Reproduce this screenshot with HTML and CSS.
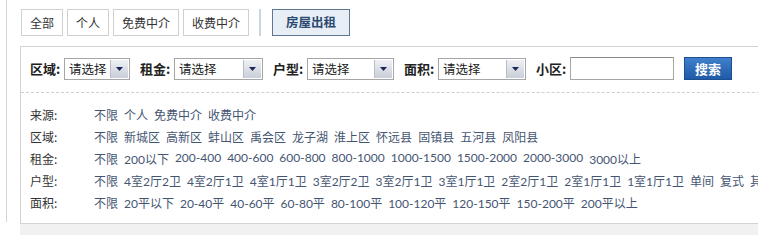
FILE: index.html
```html
<!DOCTYPE html>
<html lang="zh-CN">
<head>
<meta charset="utf-8">
<title>房屋出租</title>
<link rel="stylesheet" href="styles.css">
</head>
<body>
<div class="page">
  <div class="rail"></div>
  <div class="main">
    <div class="tabs">
      <a class="tab">全部</a>
      <a class="tab">个人</a>
      <a class="tab">免费中介</a>
      <a class="tab">收费中介</a>
      <span class="sep"></span>
      <a class="tab tab-active">房屋出租</a>
    </div>
    <div class="panel">
      <div class="filter">
        <div class="field">
          <span class="flabel">区域:</span>
          <span class="select w66"><span class="sel-text">请选择</span><span class="sel-btn"><svg width="7" height="4" viewBox="0 0 7 4"><path d="M0 0H7L3.5 4Z" fill="#1b2756"/></svg></span></span>
        </div>
        <div class="field">
          <span class="flabel">租金:</span>
          <span class="select w89"><span class="sel-text">请选择</span><span class="sel-btn"><svg width="7" height="4" viewBox="0 0 7 4"><path d="M0 0H7L3.5 4Z" fill="#1b2756"/></svg></span></span>
        </div>
        <div class="field">
          <span class="flabel">户型:</span>
          <span class="select w87"><span class="sel-text">请选择</span><span class="sel-btn"><svg width="7" height="4" viewBox="0 0 7 4"><path d="M0 0H7L3.5 4Z" fill="#1b2756"/></svg></span></span>
        </div>
        <div class="field">
          <span class="flabel">面积:</span>
          <span class="select w88"><span class="sel-text">请选择</span><span class="sel-btn"><svg width="7" height="4" viewBox="0 0 7 4"><path d="M0 0H7L3.5 4Z" fill="#1b2756"/></svg></span></span>
        </div>
        <div class="field">
          <span class="flabel">小区:</span>
          <span class="input"></span>
        </div>
        <a class="btn">搜索</a>
      </div>
      <div class="options">
        <div class="opt-row"><span class="olabel">来源:</span><span class="olinks"><a>不限</a><a>个人</a><a>免费中介</a><a>收费中介</a></span></div>
        <div class="opt-row"><span class="olabel">区域:</span><span class="olinks"><a>不限</a><a>新城区</a><a>高新区</a><a>蚌山区</a><a>禹会区</a><a>龙子湖</a><a>淮上区</a><a>怀远县</a><a>固镇县</a><a>五河县</a><a>凤阳县</a></span></div>
        <div class="opt-row"><span class="olabel">租金:</span><span class="olinks"><a>不限</a><a>200以下</a><a>200-400</a><a>400-600</a><a>600-800</a><a>800-1000</a><a>1000-1500</a><a>1500-2000</a><a>2000-3000</a><a>3000以上</a></span></div>
        <div class="opt-row"><span class="olabel">户型:</span><span class="olinks"><a>不限</a><a>4室2厅2卫</a><a>4室2厅1卫</a><a>4室1厅1卫</a><a>3室2厅2卫</a><a>3室2厅1卫</a><a>3室1厅1卫</a><a>2室2厅1卫</a><a>2室1厅1卫</a><a>1室1厅1卫</a><a>单间</a><a>复式</a><a>其他</a></span></div>
        <div class="opt-row"><span class="olabel">面积:</span><span class="olinks"><a>不限</a><a>20平以下</a><a>20-40平</a><a>40-60平</a><a>60-80平</a><a>80-100平</a><a>100-120平</a><a>120-150平</a><a>150-200平</a><a>200平以上</a></span></div>
      </div>
    </div>
    <div class="next"></div>
  </div>
</div>
</body>
</html>
```

FILE: styles.css
```css
html, body {
  margin: 0;
  padding: 0;
  background: #fff;
  overflow: hidden;
}
body {
  font-family: "Noto Sans CJK SC", "Liberation Sans", sans-serif;
  font-size: 12px;
  color: #333;
  width: 758px;
  height: 235px;
}
.page {
  display: flex;
  padding-left: 6px;
  white-space: nowrap;
}
.rail {
  flex: none;
  width: 1px;
  height: 222px;
  background: #cdd7e1;
}
.main {
  flex: none;
  width: 820px;
  margin-left: 13px;
  padding-top: 9px;
}
.tabs {
  display: flex;
  align-items: center;
  gap: 4px;
  margin-left: 1px;
  height: 27px;
  margin-bottom: 10px;
}
.tab {
  display: flex;
  align-items: center;
  height: 25px;
  padding: 0 8px;
  border: 1px solid #d0d0d0;
  background: #fff;
  color: #333;
  line-height: 1;
}
.sep {
  width: 2px;
  height: 27px;
  background: #c9d6e2;
  margin: 0 7px 0 6px;
}
.tab-active {
  padding: 0 13px;
  background: #e7eef6;
  border-color: #5d7896;
  color: #2b4a70;
  font-weight: bold;
  font-size: 12.5px;
}
.panel {
  border: 1px solid #d3d3d3;
  border-right: none;
}
.filter {
  display: flex;
  align-items: center;
  gap: 10px;
  padding: 10px 0 12px 9px;
  border-bottom: 1px dashed #cfcfcf;
}
.field {
  display: flex;
  align-items: center;
  gap: 2px;
}
.flabel {
  font-weight: bold;
  font-size: 13px;
  color: #222;
  width: 32px;
}
.select {
  display: flex;
  align-items: center;
  box-sizing: border-box;
  height: 22px;
  border: 1px solid #a6a6a6;
  background: #fff;
  padding: 0 1px 0 4px;
}
.w66 { width: 66px; }
.w89 { width: 89px; }
.w87 { width: 87px; }
.w88 { width: 88px; }
.sel-text {
  flex: 1;
  font-size: 12.5px;
  color: #222;
}
.sel-btn {
  display: flex;
  align-items: center;
  justify-content: center;
  width: 17px;
  height: 18px;
  border-left: 1px solid #b8bcc4;
  background: linear-gradient(#eef0f4, #c9ced8);
}
.input {
  display: block;
  box-sizing: border-box;
  width: 104px;
  height: 23px;
  border: 1px solid #a6a6a6;
  border-top-color: #8a8a8a;
  background: #fff;
}
.btn {
  display: flex;
  align-items: center;
  justify-content: center;
  box-sizing: border-box;
  width: 48px;
  height: 23px;
  background: linear-gradient(#3f80cc, #1f5aa8);
  border: 1px solid #1b4f92;
  color: #fff;
  font-weight: bold;
  font-size: 13px;
}
.options {
  padding: 10px 0 10px 9px;
}
.opt-row {
  display: flex;
  align-items: center;
  height: 22px;
}
.olabel {
  width: 64px;
  color: #333;
  flex: none;
}
.olinks {
  display: flex;
  gap: 6px;
  font-family: Lato, "Noto Sans CJK SC", sans-serif;
}
.olinks a {
  color: #445572;
}
.next {
  height: 12px;
  background: #f1f1f1;
}
```
